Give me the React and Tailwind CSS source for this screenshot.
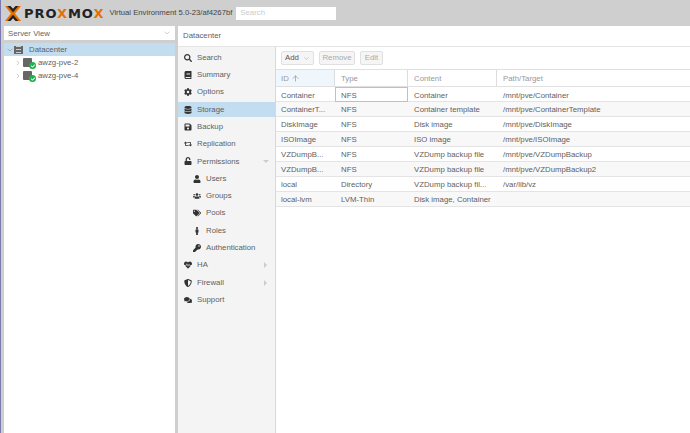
import React from 'react';
import {
  FaSearch, FaBook, FaCog, FaDatabase, FaSave, FaRetweet, FaUnlock, FaUser, FaUsers,
  FaTags, FaMale, FaKey, FaHeartbeat, FaShieldAlt, FaComments, FaCheck,
} from 'react-icons/fa';
import { ChevronDown, ChevronRight, ArrowUp } from 'lucide-react';

const menu = [
  { label: 'Search', icon: FaSearch },
  { label: 'Summary', icon: FaBook },
  { label: 'Options', icon: FaCog },
  { label: 'Storage', icon: FaDatabase, active: true },
  { label: 'Backup', icon: FaSave },
  { label: 'Replication', icon: FaRetweet },
  { label: 'Permissions', icon: FaUnlock, caret: 'down' },
  { label: 'Users', icon: FaUser, sub: true },
  { label: 'Groups', icon: FaUsers, sub: true },
  { label: 'Pools', icon: FaTags, sub: true },
  { label: 'Roles', icon: FaMale, sub: true },
  { label: 'Authentication', icon: FaKey, sub: true },
  { label: 'HA', icon: FaHeartbeat, caret: 'right' },
  { label: 'Firewall', icon: FaShieldAlt, caret: 'right' },
  { label: 'Support', icon: FaComments },
];

const rows = [
  ['Container', 'NFS', 'Container', '/mnt/pve/Container'],
  ['ContainerT...', 'NFS', 'Container template', '/mnt/pve/ContainerTemplate'],
  ['DiskImage', 'NFS', 'Disk image', '/mnt/pve/DiskImage'],
  ['ISOImage', 'NFS', 'ISO image', '/mnt/pve/ISOImage'],
  ['VZDumpB...', 'NFS', 'VZDump backup file', '/mnt/pve/VZDumpBackup'],
  ['VZDumpB...', 'NFS', 'VZDump backup file', '/mnt/pve/VZDumpBackup2'],
  ['local', 'Directory', 'VZDump backup fil...', '/var/lib/vz'],
  ['local-lvm', 'LVM-Thin', 'Disk image, Container', ''],
];

const Logo = () => (
  <div className="flex items-center">
    <svg width="16" height="15" viewBox="0 0 16 15" className="mr-[3px]">
      <path d="M0 0h4l4 4.6L12 0h4L10 7.5 16 15h-4L8 10.4 4 15H0l6-7.5z" fill="#e57000" />
      <path d="M2.5 0h3L8 2.8 10.500 0h3L8 6.200zM2.500 15h3L8 12.200l2.500 2.800h3L8 8.800z" fill="#222" />
    </svg>
    <span className="font-['DejaVu_Sans',sans-serif] font-bold text-[13px] leading-none tracking-[0.95px] text-[#222]">
      PRO<span className="text-[#e57000]">X</span>MO<span className="text-[#e57000]">X</span>
    </span>
  </div>
);

const NodeRow = ({ name }) => (
  <div className="flex items-center h-[13px] pl-[10px]">
    <ChevronRight size={8} className="text-[#bbb] mr-[1px]" />
    <div className="relative w-[9px] h-[9px] bg-[#666] rounded-[1px] mr-[6px]">
      <div className="absolute right-[-4px] bottom-[-2px] w-[7px] h-[7px] rounded-full bg-[#21b04b] flex items-center justify-center">
        <FaCheck size={4} className="text-white" />
      </div>
    </div>
    <span className="pt-[1px]">{name}</span>
  </div>
);

const MenuItem = ({ item }) => {
  const Icon = item.icon;
  return (
    <div className="h-[17.3px] flex items-center">
      <div className={`flex-1 flex items-center h-[14.4px] ${item.active ? 'bg-[#c2dcf0]' : ''} ${item.sub ? 'pl-[13px]' : 'pl-[4px]'}`}>
        <span className="w-[12px] flex justify-center text-[#333]">
          <Icon size={8} />
        </span>
        <span className="ml-[3px] flex-1">{item.label}</span>
        {item.caret === 'down' && <span className="mr-[6px] w-0 h-0 border-x-[3px] border-x-transparent border-t-[3px] border-t-[#ccc]" />}
        {item.caret === 'right' && <span className="mr-[8px] w-0 h-0 border-y-[3px] border-y-transparent border-l-[3px] border-l-[#ccc]" />}
      </div>
    </div>
  );
};

const ToolButton = ({ children, disabled, width }) => (
  <div className={`h-[14px] ${width} flex items-center justify-center rounded-[2px] border border-[#e0e0e0] bg-[#f5f5f5] ${disabled ? 'text-[#aaa]' : 'text-[#555]'}`}>
    {children}
  </div>
);

const cols = 'grid grid-cols-[59px_73px_89px_1fr]';

export default function App() {
  return (
    <div className="w-[690px] h-[433px] overflow-hidden bg-[#cfcfcf] border-l border-[#7a7ab0] font-['Liberation_Sans',sans-serif] text-[7.8px] text-[#5f5f5f] flex flex-col">
      <div className="h-[26px] flex items-center pl-[4px] shrink-0">
        <Logo />
        <span className="ml-[5px] text-[#444] text-[7.7px] whitespace-nowrap">Virtual Environment 5.0-23/af4267bf</span>
        <div className="ml-[4px] w-[100px] h-[13px] bg-white flex items-center pl-[4px] text-[#ccc]">Search</div>
      </div>
      <div className="flex-1 flex min-h-0">
        <div className="w-[171px] ml-[3px] flex flex-col shrink-0">
          <div className="h-[14px] bg-white flex items-center justify-between px-[4px] text-[#666]">
            <span className="pt-[1px]">Server View</span>
            <ChevronDown size={8} className="text-[#bbb]" />
          </div>
          <div className="h-[3px]" />
          <div className="flex-1 bg-white">
            <div className="flex items-center h-[13px] pl-[2px] bg-[#c2dcf0]">
              <ChevronDown size={8} className="text-[#999]" />
              <div className="w-[9px] h-[8px] bg-[#666] mr-[6px] flex flex-col justify-around px-[2px]">
                <div className="h-px bg-[#ccc]" />
                <div className="h-px bg-[#ccc]" />
                <div className="h-px bg-[#ccc]" />
              </div>
              <span className="pt-[1px]">Datacenter</span>
            </div>
            <NodeRow name="awzg-pve-2" />
            <NodeRow name="awzg-pve-4" />
          </div>
        </div>
        <div className="w-[3px] shrink-0" />
        <div className="flex-1 flex flex-col min-w-0">
          <div className="h-[21px] bg-white flex items-center pl-[5px] shrink-0 border-b border-[#e5e5e5]">Datacenter</div>
          <div className="flex-1 flex min-h-0">
            <div className="w-[98px] shrink-0 bg-[#f4f4f4] border-r border-[#d8d8d8] pt-[2px]">
              {menu.map((item) => (
                <MenuItem key={item.label} item={item} />
              ))}
            </div>
            <div className="flex-1 bg-white min-w-0">
              <div className="h-[22px] flex items-center gap-[5px] pl-[5px] bg-white">
                <ToolButton width="w-[33px]">Add <ChevronDown size={7} className="ml-[4px] text-[#aaa]" /></ToolButton>
                <ToolButton disabled width="w-[36px]">Remove</ToolButton>
                <ToolButton disabled width="w-[23px]">Edit</ToolButton>
              </div>
              <div className={`${cols} h-[18px] border-y border-[#e0e0e0] text-[#999]`}>
                <div className="bg-[#f0f7fc] border-r border-[#ddd] flex items-center pl-[5px] pt-[1px]">ID <ArrowUp size={9} className="ml-[2px]" /></div>
                <div className="border-r border-[#ddd] flex items-center pl-[6px] pt-[1px]">Type</div>
                <div className="border-r border-[#ddd] flex items-center pl-[6px] pt-[1px]">Content</div>
                <div className="flex items-center pl-[6px] pt-[1px]">Path/Target</div>
              </div>
              {rows.map((r, i) => (
                <div key={i} className={`${cols} h-[15px] border-b border-[#e4e4e4] items-center ${i % 2 ? 'bg-[#f8f8f8]' : 'bg-white'}`}>
                  <div className="pl-[5px] pt-[1.5px] whitespace-nowrap">{r[0]}</div>
                  <div className={`pt-[1.5px] h-full flex items-center ${i === 0 ? 'pl-[5px] border border-[#a9c6dc]' : 'pl-[6px]'}`}>{r[1]}</div>
                  <div className="pl-[6px] pt-[1.5px] whitespace-nowrap">{r[2]}</div>
                  <div className="pl-[6px] pt-[1.5px] whitespace-nowrap">{r[3]}</div>
                </div>
              ))}
            </div>
          </div>
        </div>
      </div>
    </div>
  );
}
